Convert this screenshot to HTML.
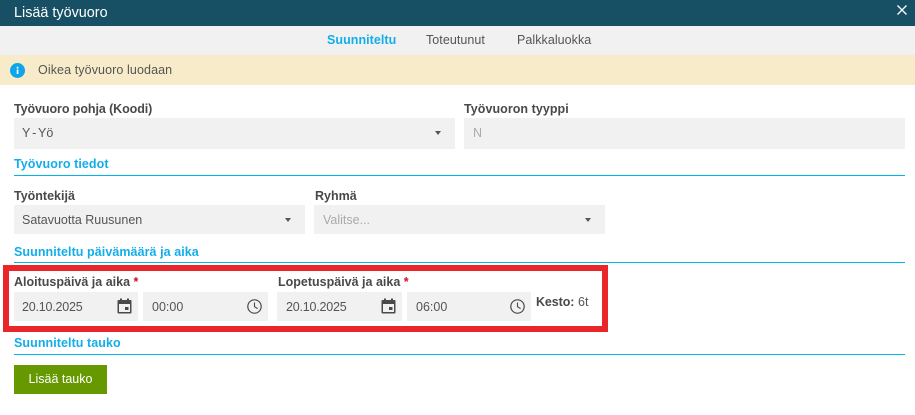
<!DOCTYPE html>
<html lang="fi">
<head>
<meta charset="utf-8">
<style>
html,body{margin:0;padding:0;background:#fff}
body{width:915px;height:415px;position:relative;overflow:hidden;font-family:"Liberation Sans",sans-serif;font-size:12.5px;color:#4a4a4a}
.a{position:absolute;white-space:nowrap}
.box{position:absolute;background:#f1f1f1}
.lbl{position:absolute;white-space:nowrap;font-weight:bold;color:#494949;font-size:12.5px;line-height:16px}
.sec{position:absolute;white-space:nowrap;font-weight:bold;color:#12aeea;font-size:12.5px;line-height:16px;letter-spacing:.07px}
.line{position:absolute;left:14px;width:891px;height:1px;background:#00b5ec}
.val{position:absolute;white-space:nowrap;line-height:16px;font-size:12.5px;color:#555}
.dt{letter-spacing:-.2px}
.caret{position:absolute;width:0;height:0;border-left:3.5px solid transparent;border-right:3.5px solid transparent;border-top:4px solid #555}
svg{position:absolute}
</style>
</head>
<body>
<div class="a" style="left:0;top:0;width:915px;height:26px;background:#175064"></div>
<div class="a" style="left:14px;top:4px;color:#fff;font-size:14.4px;line-height:18px">Lisää työvuoro</div>
<svg style="left:897px;top:5px" width="10" height="10" viewBox="0 0 10 10"><path d="M.5 .5L9.5 9.5M9.5 .5L.5 9.5" stroke="#fff" stroke-width="1.3" fill="none"/></svg>

<div class="a" style="left:0;top:26px;width:915px;height:29px;background:#f1f1f1"></div>
<div class="a" style="left:327px;top:32px;font-weight:bold;color:#12aeea;line-height:16px;font-size:12.5px;letter-spacing:.05px">Suunniteltu</div>
<div class="a" style="left:426px;top:32px;line-height:16px;color:#555;font-size:12.5px;letter-spacing:.05px">Toteutunut</div>
<div class="a" style="left:517px;top:32px;line-height:16px;color:#555;font-size:12.5px;letter-spacing:.05px">Palkkaluokka</div>

<div class="a" style="left:0;top:55px;width:915px;height:30px;background:#f8ebc9"></div>
<svg style="left:10px;top:63px" width="15" height="15" viewBox="0 0 15 15"><circle cx="7.5" cy="7.5" r="7.5" fill="#0ea5ea"/><rect x="6.7" y="6.5" width="1.7" height="4.5" fill="#fff"/><rect x="6.7" y="3.8" width="1.7" height="1.7" fill="#fff"/></svg>
<div class="a" style="left:38px;top:62px;line-height:16px;color:#555;font-size:12.5px;letter-spacing:.1px">Oikea työvuoro luodaan</div>

<div class="lbl" style="left:14px;top:101px;letter-spacing:-.08px">Työvuoro pohja (Koodi)</div>
<div class="box" style="left:14px;top:118px;width:441px;height:31px"></div>
<div class="val" style="left:22px;top:125px;word-spacing:-1.5px">Y - Yö</div>
<div class="caret" style="left:435px;top:131px"></div>
<div class="lbl" style="left:464px;top:101px;letter-spacing:.05px">Työvuoron tyyppi</div>
<div class="box" style="left:464px;top:118px;width:441px;height:31px"></div>
<div class="val" style="left:473px;top:125px;color:#aaa">N</div>

<div class="sec" style="left:14px;top:156px">Työvuoro tiedot</div>
<div class="line" style="top:175px"></div>

<div class="lbl" style="left:14px;top:188px">Työntekijä</div>
<div class="box" style="left:14px;top:205px;width:291px;height:29px"></div>
<div class="val" style="left:22px;top:212px">Satavuotta Ruusunen</div>
<div class="caret" style="left:285px;top:218px"></div>
<div class="lbl" style="left:315px;top:188px">Ryhmä</div>
<div class="box" style="left:314px;top:205px;width:291px;height:29px"></div>
<div class="val" style="left:323px;top:212px;color:#aaa">Valitse...</div>
<div class="caret" style="left:585px;top:218px"></div>

<div class="sec" style="left:14px;top:244px">Suunniteltu päivämäärä ja aika</div>
<div class="line" style="top:262px"></div>

<div class="a" style="left:3px;top:265px;width:593px;height:55px;border:6px solid #e9262a"></div>

<div class="lbl" style="left:14px;top:274px">Aloituspäivä ja aika <span style="color:#c8102e">*</span></div>
<div class="box" style="left:14px;top:292px;width:124px;height:29px"></div>
<div class="val dt" style="left:22px;top:299px">20.10.2025</div>
<svg style="left:117px;top:298px" width="15" height="16" viewBox="0 0 15 16"><path d="M3 0.5h2v1.5h5V0.5h2V2h1.5A1 1 0 0 1 14.5 3v11.5a1 1 0 0 1-1 1h-12a1 1 0 0 1-1-1V3a1 1 0 0 1 1-1H3z M2 6v8h11V6z" fill="#4a4a4a" fill-rule="evenodd"/><rect x="8" y="9" width="3.5" height="3" fill="#4a4a4a"/></svg>
<div class="box" style="left:143px;top:292px;width:125px;height:29px"></div>
<div class="val" style="left:152px;top:299px">00:00</div>
<svg style="left:247px;top:299px" width="15" height="15" viewBox="0 0 15 15"><circle cx="7.5" cy="7.5" r="6.7" fill="none" stroke="#4a4a4a" stroke-width="1.2"/><path d="M7.5 3.5V7.7L10.6 9.6" fill="none" stroke="#4a4a4a" stroke-width="1.1"/></svg>

<div class="lbl" style="left:278px;top:274px">Lopetuspäivä ja aika <span style="color:#c8102e">*</span></div>
<div class="box" style="left:277px;top:292px;width:125px;height:29px"></div>
<div class="val dt" style="left:286px;top:299px">20.10.2025</div>
<svg style="left:381px;top:298px" width="15" height="16" viewBox="0 0 15 16"><path d="M3 0.5h2v1.5h5V0.5h2V2h1.5A1 1 0 0 1 14.5 3v11.5a1 1 0 0 1-1 1h-12a1 1 0 0 1-1-1V3a1 1 0 0 1 1-1H3z M2 6v8h11V6z" fill="#4a4a4a" fill-rule="evenodd"/><rect x="8" y="9" width="3.5" height="3" fill="#4a4a4a"/></svg>
<div class="box" style="left:407px;top:292px;width:124px;height:29px"></div>
<div class="val" style="left:416px;top:299px">06:00</div>
<svg style="left:510px;top:299px" width="15" height="15" viewBox="0 0 15 15"><circle cx="7.5" cy="7.5" r="6.7" fill="none" stroke="#4a4a4a" stroke-width="1.2"/><path d="M7.5 3.5V7.7L10.6 9.6" fill="none" stroke="#4a4a4a" stroke-width="1.1"/></svg>
<div class="lbl" style="left:536px;top:294px;letter-spacing:-.1px">Kesto:</div>
<div class="val" style="left:578px;top:294px;font-size:12.5px">6t</div>

<div class="sec" style="left:14px;top:335px">Suunniteltu tauko</div>
<div class="line" style="top:354px"></div>

<div class="a" style="left:14px;top:365px;width:93px;height:29px;background:#669900;color:#fff;text-align:center;line-height:29px;font-size:12.5px">Lisää tauko</div>
</body>
</html>
